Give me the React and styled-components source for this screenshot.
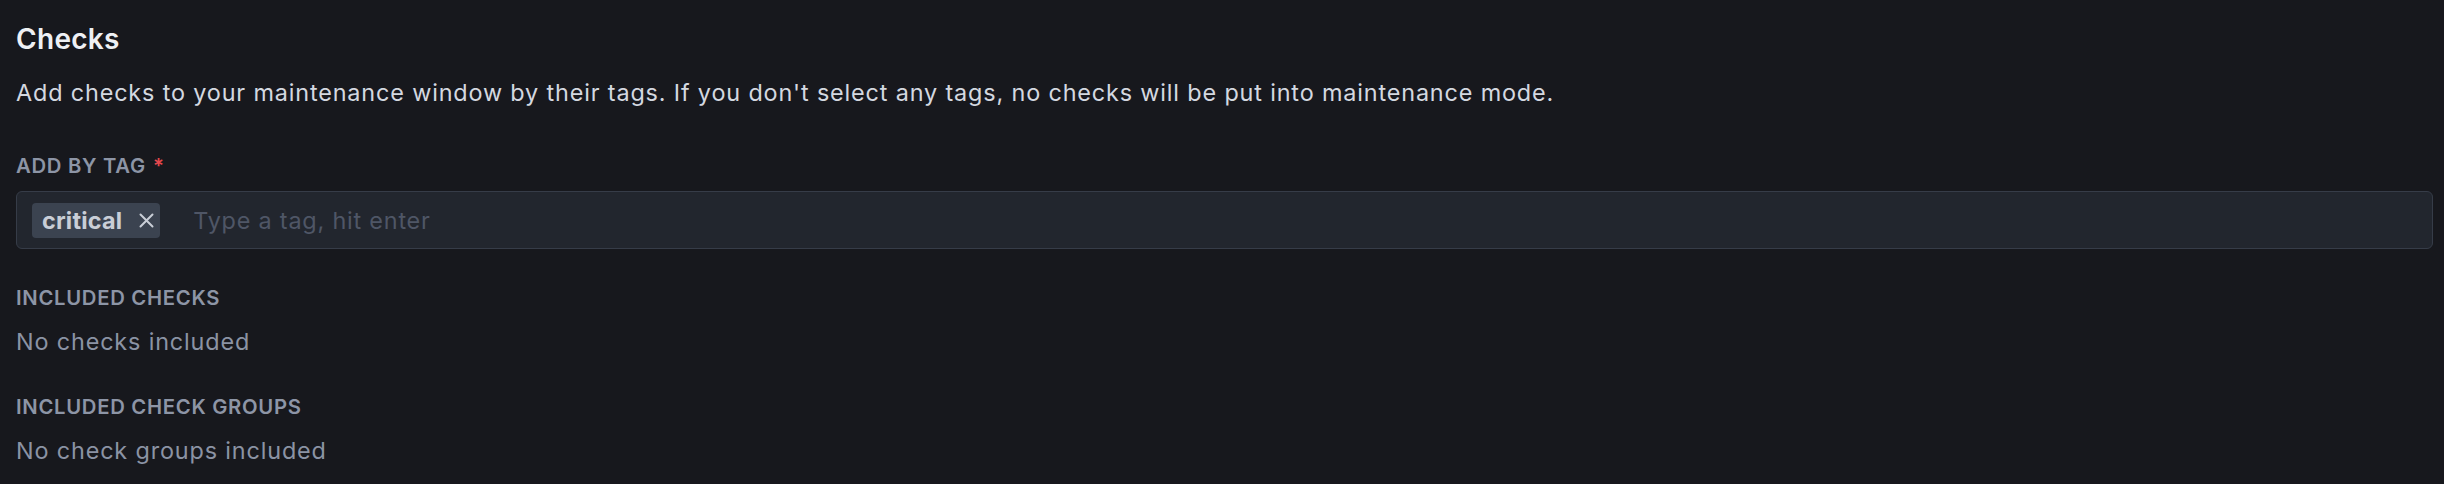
import React, { useState } from "react";
import styled, { createGlobalStyle } from "styled-components";

const GlobalStyle = createGlobalStyle`
  html, body {
    margin: 0;
    padding: 0;
    background: #17181d;
  }
  body {
    font-family: Inter, "Noto Sans", sans-serif;
    -webkit-font-smoothing: antialiased;
  }
`;

const Page = styled.div`
  box-sizing: border-box;
  width: 2444px;
  min-height: 484px;
  padding: 21px 11px 0 16px;
  background: #17181d;
`;

const Title = styled.h2`
  margin: 0;
  font-size: 28px;
  line-height: 36px;
  font-weight: 600;
  letter-spacing: 0.3px;
  color: #eef0f4;
`;

const Description = styled.p`
  margin: 18px 0 0;
  font-size: 23.4px;
  line-height: 35px;
  letter-spacing: 0.85px;
  color: #d4d8e0;
`;

const Section = styled.div`
  margin-top: ${(p) => p.$top}px;
  display: flex;
  flex-direction: column;
  gap: ${(p) => p.$gap}px;
`;

const Label = styled.div`
  font-size: 20.3px;
  line-height: 30px;
  font-weight: 600;
  letter-spacing: 0.7px;
  text-transform: uppercase;
  color: #8d95a6;
`;

const Required = styled.span`
  color: #e5484d;
  margin-left: 7px;
`;

const TagBox = styled.div`
  box-sizing: border-box;
  height: 58px;
  display: flex;
  align-items: center;
  gap: 31px;
  padding: 0 15px;
  background: #22262e;
  border: 1px solid #363c48;
  border-radius: 6px;
`;

const Tag = styled.span`
  display: inline-flex;
  align-items: center;
  gap: 17px;
  height: 35px;
  padding: 0 6px 0 10px;
  background: #3b4350;
  border-radius: 4px;
  color: #c9ced7;
  font-size: 23.4px;
  font-weight: 700;
  letter-spacing: 0.2px;
`;

const RemoveButton = styled.button`
  display: inline-flex;
  padding: 0;
  border: 0;
  background: none;
  color: #c9ced7;
  cursor: pointer;
`;

const TagInput = styled.input`
  flex: 1;
  min-width: 0;
  border: 0;
  outline: none;
  background: transparent;
  font-family: inherit;
  font-size: 23.4px;
  letter-spacing: 0.8px;
  color: #d4d8e0;

  &::placeholder {
    color: #4f5666;
  }
`;

const Muted = styled.div`
  font-size: 23.4px;
  line-height: 35px;
  letter-spacing: 0.85px;
  color: #8b93a4;
`;

const CloseIcon = () => (
  <svg width="15" height="15" viewBox="0 0 15 15" fill="none">
    <path
      d="M1.5 1.5l12 12M13.5 1.5l-12 12"
      stroke="currentColor"
      strokeWidth="2"
      strokeLinecap="round"
    />
  </svg>
);

export default function App() {
  const [tags, setTags] = useState(["critical"]);

  return (
    <Page>
      <GlobalStyle />
      <Title>Checks</Title>
      <Description>
        Add checks to your maintenance window by their tags. If you don't
        select any tags, no checks will be put into maintenance mode.
      </Description>

      <Section $top={41} $gap={10}>
        <Label>
          Add by tag<Required>*</Required>
        </Label>
        <TagBox>
          {tags.map((t) => (
            <Tag key={t}>
              {t}
              <RemoveButton onClick={() => setTags(tags.filter((x) => x !== t))}>
                <CloseIcon />
              </RemoveButton>
            </Tag>
          ))}
          <TagInput placeholder="Type a tag, hit enter" />
        </TagBox>
      </Section>

      <Section $top={34} $gap={11}>
        <Label>Included checks</Label>
        <Muted>No checks included</Muted>
      </Section>

      <Section $top={33} $gap={11}>
        <Label>Included check groups</Label>
        <Muted>No check groups included</Muted>
      </Section>
    </Page>
  );
}
